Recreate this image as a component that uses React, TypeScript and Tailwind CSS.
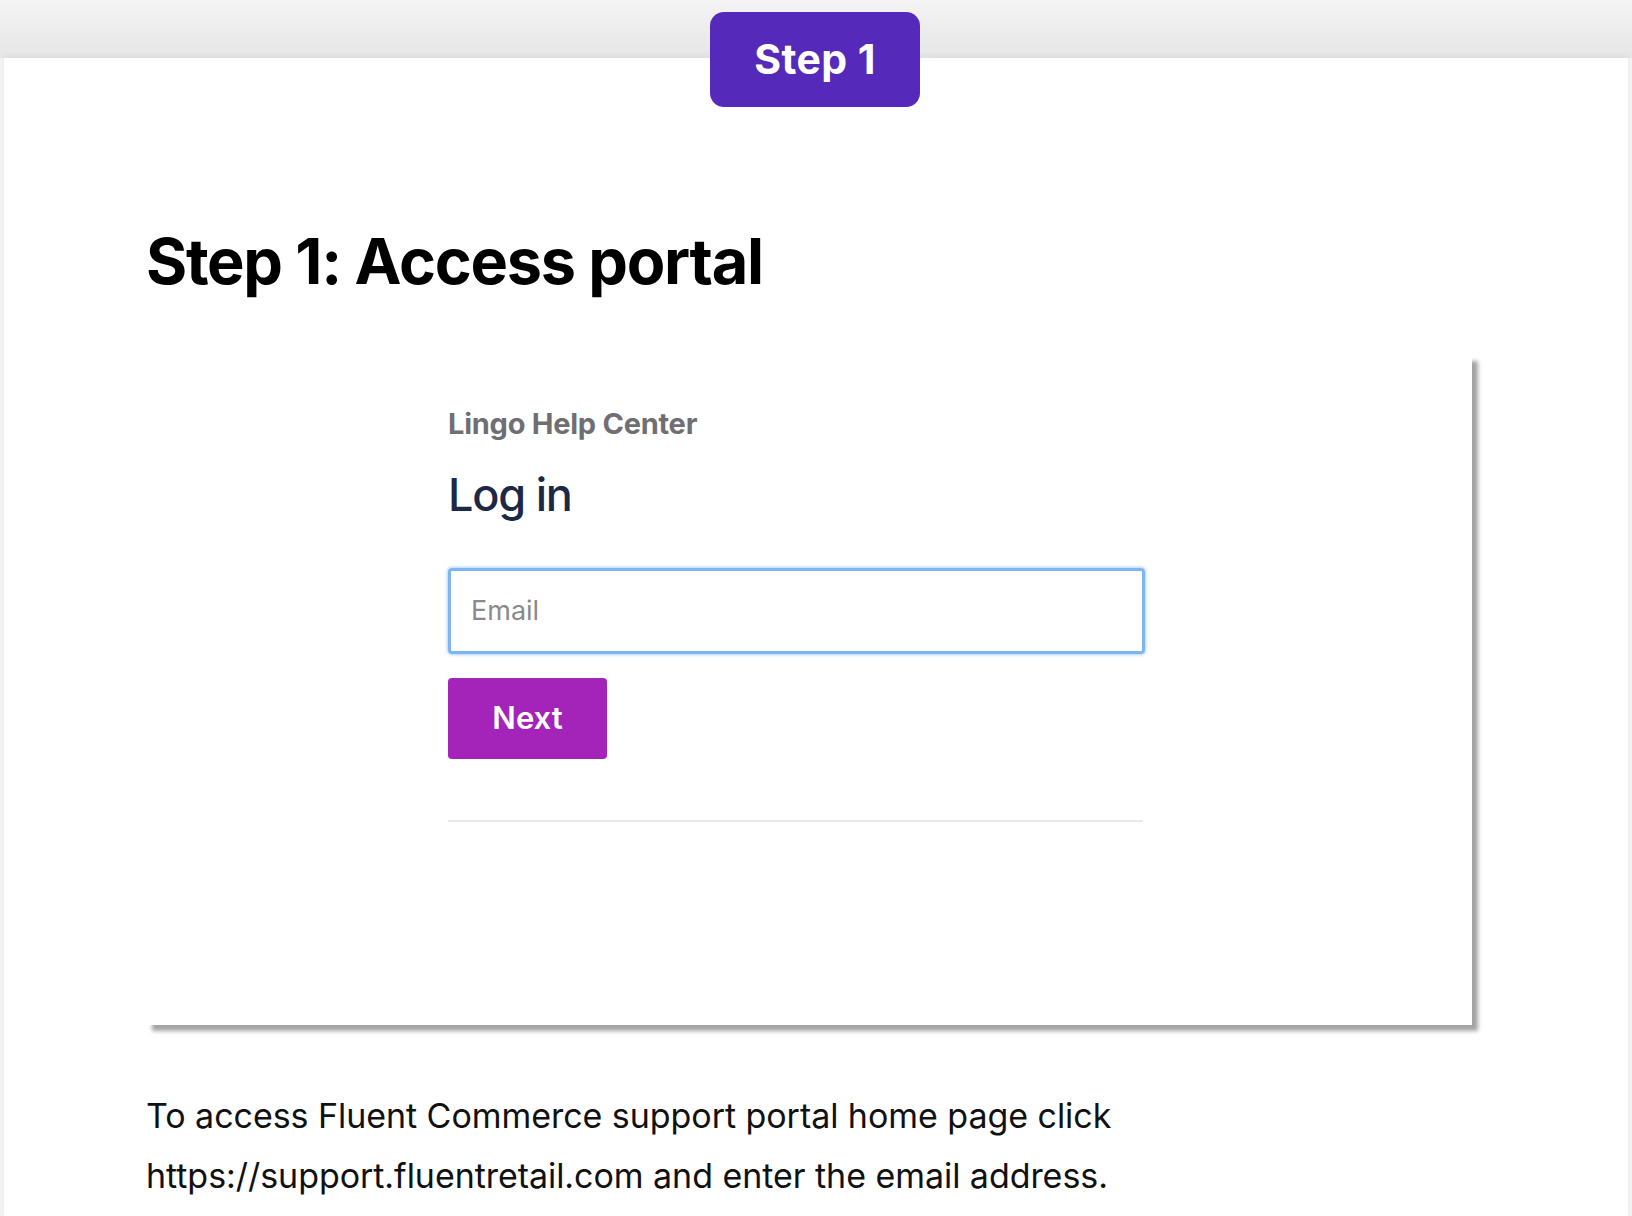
import React from "react";

export default function App() {
  return (
    <div
      className="relative h-[1216px] w-full overflow-hidden bg-[#f3f3f3]"
      style={{ fontFamily: "Inter, 'Noto Sans', sans-serif" }}
    >
      <div className="h-[58px] bg-gradient-to-b from-[#f4f4f4] to-[#e6e6e6]" />
      <div className="mx-[4px] h-[1158px] bg-white shadow-[0_-2px_6px_rgba(0,0,0,0.04)]">
        <div className="pl-[142px] pt-[167px]">
          <h1 className="text-[63px] font-bold leading-[72px] tracking-[-1.3px] text-black">
            Step 1: Access portal
          </h1>
          <div className="mt-[58px] h-[670px] w-[1326px] bg-white pl-[302px] pt-[52px] shadow-[6px_6px_4px_rgba(0,0,0,0.36)]">
            <div className="text-[29px] font-bold leading-[34px] tracking-[-0.25px] text-[#6f6f73]">
              Lingo Help Center
            </div>
            <div className="mt-[27px] text-[45px] font-medium leading-[54px] tracking-[-1.2px] text-[#1b2846]">
              Log in
            </div>
            <div className="mt-[46px] flex h-[86px] w-[697px] items-center rounded-[4px] border-[3px] border-[#7db5f3] pl-[20px] shadow-[0_0_3px_1px_rgba(125,181,243,0.6)]">
              <span className="text-[27px] text-[#8a8a8a]">Email</span>
            </div>
            <div className="mt-[24px] flex h-[81px] w-[159px] items-center justify-center rounded-[4px] bg-[#a424b9] text-[31px] font-semibold text-white">
              Next
            </div>
            <div className="mt-[61px] h-[2px] w-[695px] bg-[#e8e8e8]" />
          </div>
          <p className="mt-[61px] text-[34px] leading-[60px] tracking-[-0.05px] text-[#111]">
            To access Fluent Commerce support portal home page click
            <br />
            https://support.fluentretail.com and enter the email address.
          </p>
        </div>
      </div>
      <div className="absolute left-[710px] top-[12px] flex h-[95px] w-[210px] items-center justify-center rounded-[14px] bg-[#5529b9] text-[41px] font-bold tracking-[0.4px] text-white">
        Step 1
      </div>
    </div>
  );
}
